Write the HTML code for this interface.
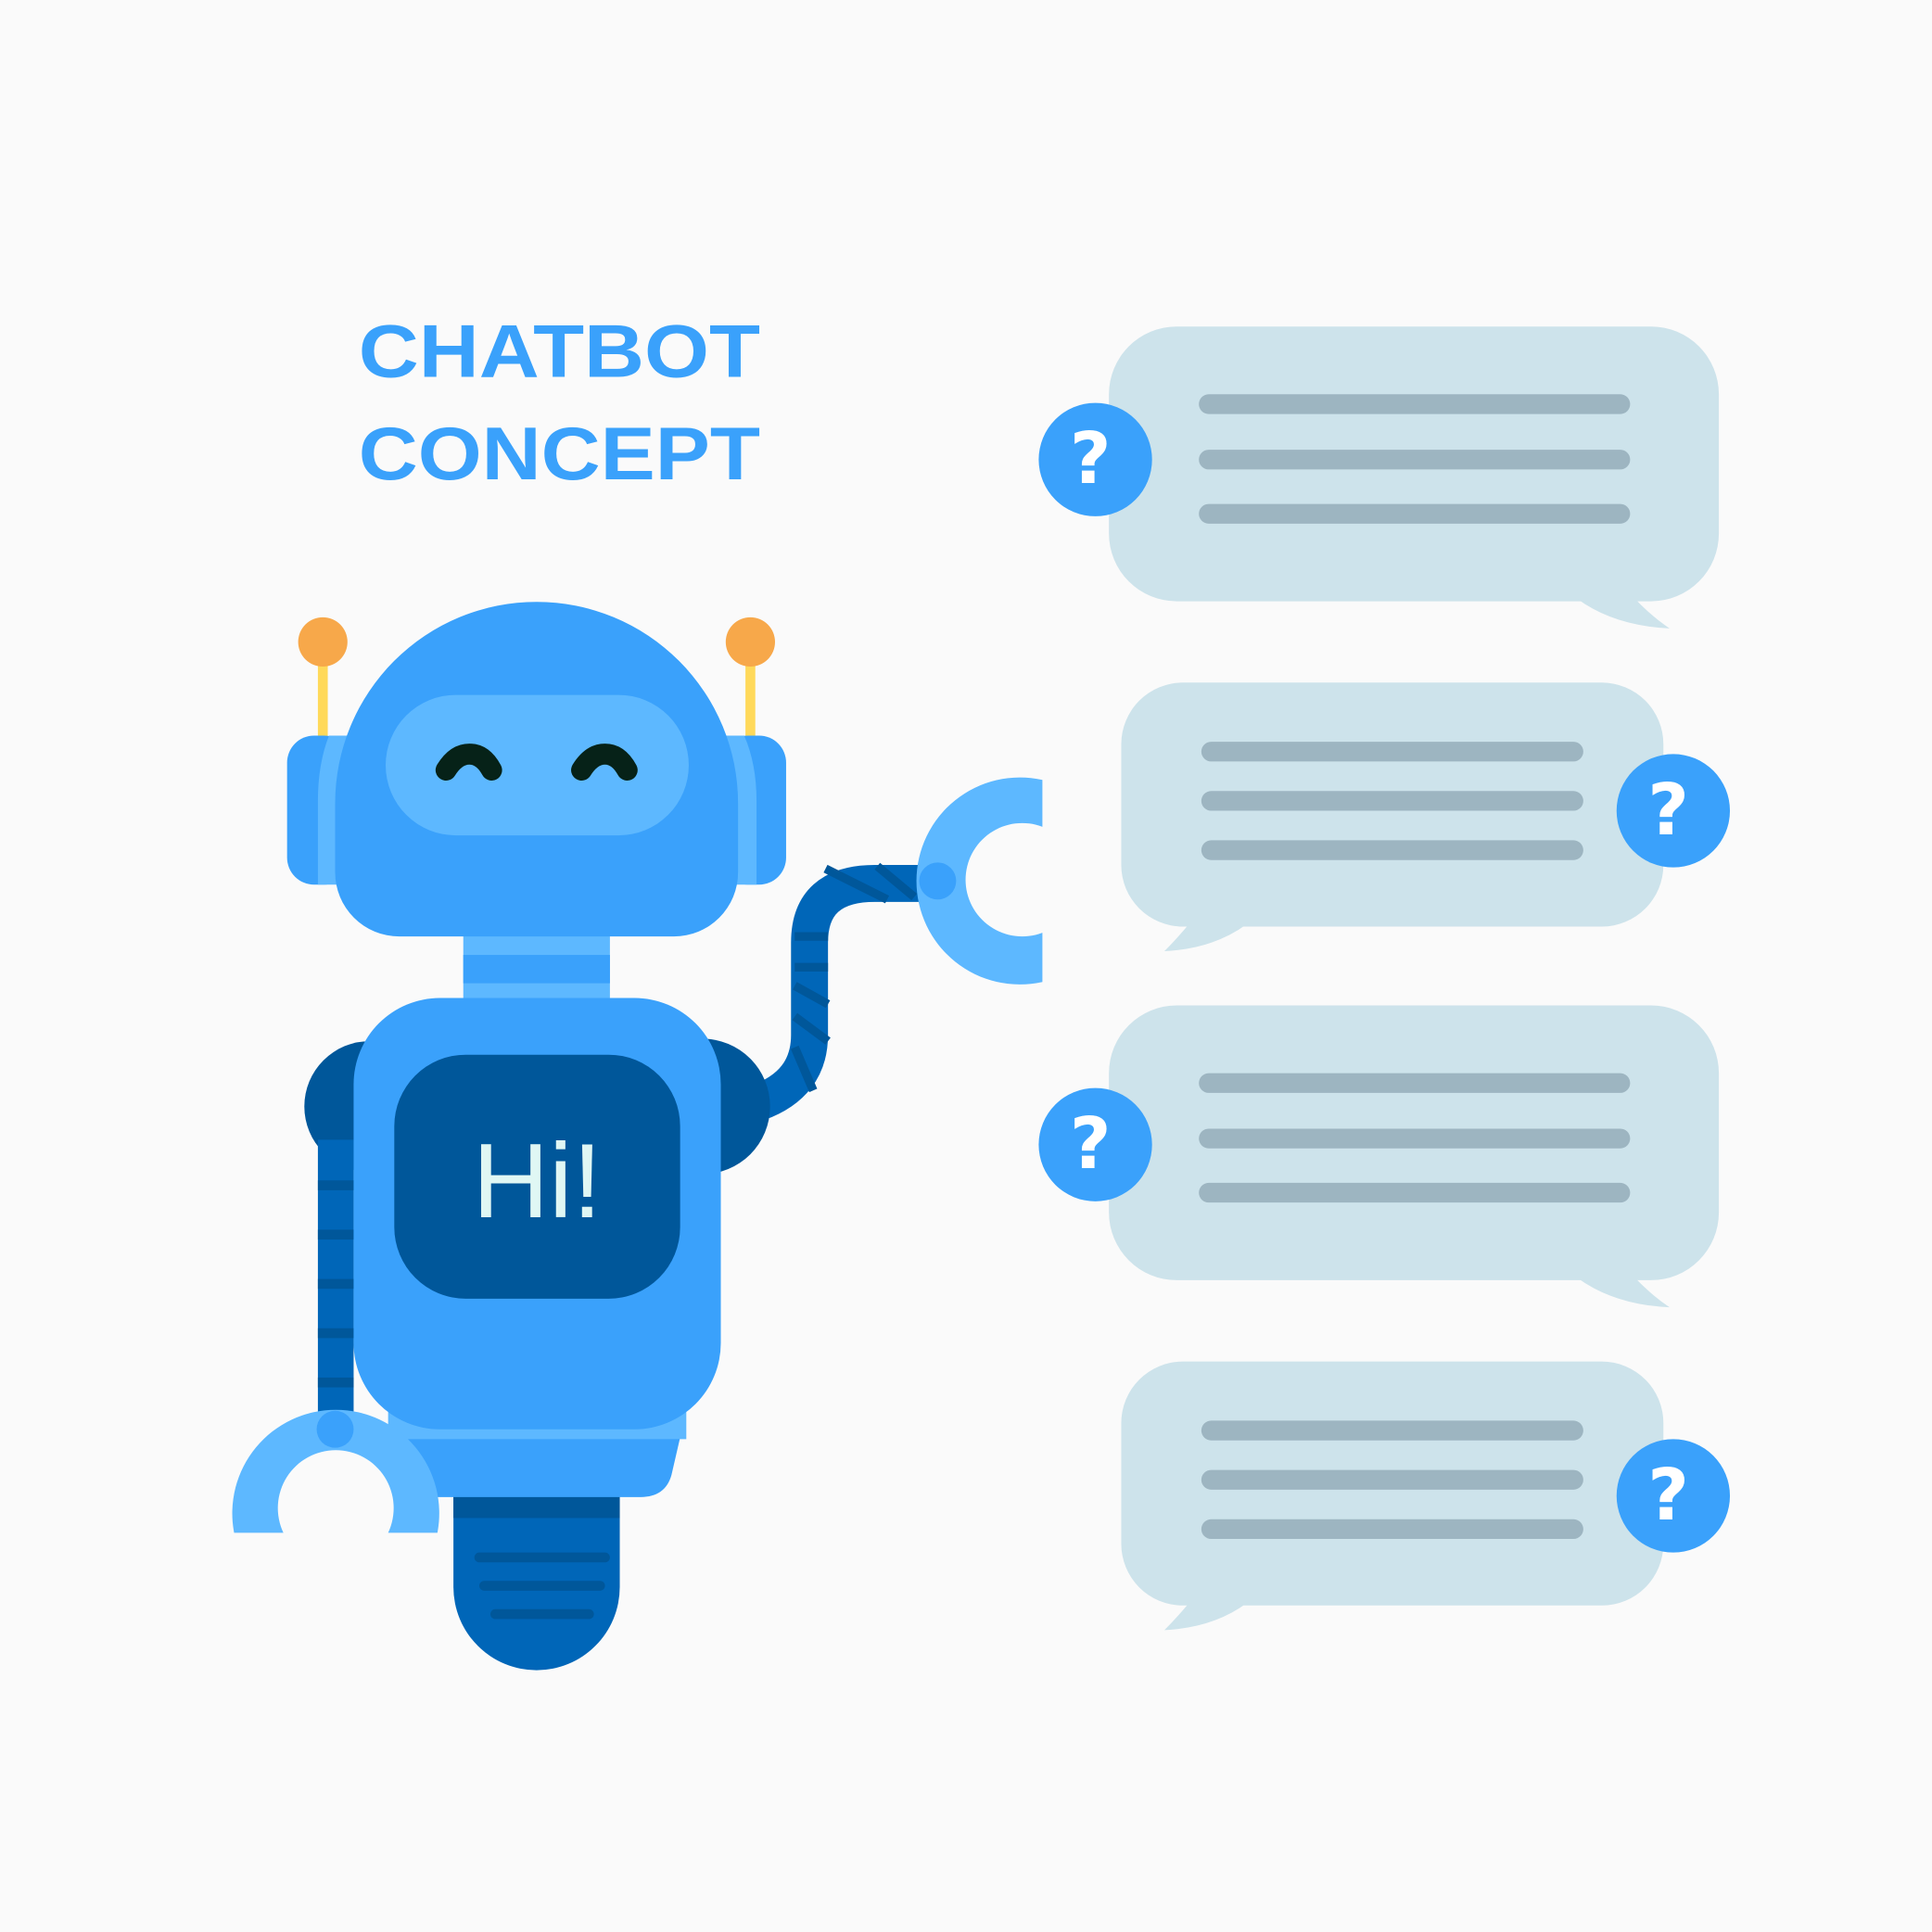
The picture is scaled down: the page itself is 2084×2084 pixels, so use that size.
<!DOCTYPE html>
<html><head><meta charset="utf-8"><style>html,body{margin:0;padding:0;background:#fafafa}svg{display:block}</style></head>
<body>
<svg width="2084" height="2084" viewBox="0 0 1568 1568" xmlns="http://www.w3.org/2000/svg">
<rect width="1568" height="1568" fill="#fafafa"/>
<g font-family="Liberation Sans, sans-serif" font-weight="bold" fill="#3aa1fb" font-size="61">
<text x="291" y="306" textLength="326" lengthAdjust="spacingAndGlyphs">CHATBOT</text>
<text x="291" y="389" textLength="326" lengthAdjust="spacingAndGlyphs">CONCEPT</text>
</g>
<defs>
<g id="q"><circle r="46" fill="#3aa1fb"/><text x="-4" y="19" text-anchor="middle" font-family="DejaVu Sans, sans-serif" font-weight="bold" font-size="58" fill="#fff">?</text></g>
</defs>
<g fill="#cde3eb">
<rect x="900" y="265" width="495" height="223" rx="55"/>
<path d="M1280,486 Q1310,508 1355,510 Q1340,500 1325,484 Z"/>
<rect x="910" y="554" width="440" height="198" rx="50"/>
<path d="M965,750 Q955,762 945,772 Q985,770 1012,750 Z"/>
<rect x="900" y="816" width="495" height="223" rx="55"/>
<path d="M1280,1037 Q1310,1059 1355,1061 Q1340,1051 1325,1035 Z"/>
<rect x="910" y="1105" width="440" height="198" rx="50"/>
<path d="M965,1301 Q955,1313 945,1323 Q985,1321 1012,1301 Z"/>
</g>
<g stroke="#9db5c1" stroke-width="16" stroke-linecap="round">
<line x1="981" y1="328" x2="1315" y2="328"/><line x1="981" y1="373" x2="1315" y2="373"/><line x1="981" y1="417" x2="1315" y2="417"/>
<line x1="983" y1="610" x2="1277" y2="610"/><line x1="983" y1="650" x2="1277" y2="650"/><line x1="983" y1="690" x2="1277" y2="690"/>
<line x1="981" y1="879" x2="1315" y2="879"/><line x1="981" y1="924" x2="1315" y2="924"/><line x1="981" y1="968" x2="1315" y2="968"/>
<line x1="983" y1="1161" x2="1277" y2="1161"/><line x1="983" y1="1201" x2="1277" y2="1201"/><line x1="983" y1="1241" x2="1277" y2="1241"/>
</g>
<use href="#q" x="889" y="373"/><use href="#q" x="1358" y="658"/><use href="#q" x="889" y="929"/><use href="#q" x="1358" y="1214"/>
<line x1="262" y1="540" x2="262" y2="600" stroke="#ffd95a" stroke-width="8"/>
<line x1="609" y1="540" x2="609" y2="600" stroke="#ffd95a" stroke-width="8"/>
<circle cx="262" cy="521" r="20" fill="#f7a84a"/><circle cx="609" cy="521" r="20" fill="#f7a84a"/>
<rect x="233" y="597" width="52" height="121" rx="22" fill="#3aa1fb"/>
<rect x="585" y="597" width="53" height="121" rx="22" fill="#3aa1fb"/>
<path d="M267,597 L285,597 L285,718 L258,718 L258,650 Q258,620 267,597 Z" fill="#5db8ff"/>
<path d="M604,597 L586,597 L586,718 L614,718 L614,650 Q614,620 604,597 Z" fill="#5db8ff"/>
<path d="M615,895 Q657,880 657,840 L657,765 Q657,717 710,717 L762,717" fill="none" stroke="#0066b8" stroke-width="30"/>
<path d="M645,760 L672,760 M645,785 L672,785 M645,800 L672,815 M645,825 L672,845 M645,850 L660,885 M670,705 L720,730 M712,703 L742,728" stroke="#00579a" stroke-width="7"/>
<path d="M846,633 A84,84 0 1 0 846,797 L846,757 A46,46 0 1 1 846,671 Z" fill="#5db8ff"/>
<circle cx="761" cy="715" r="15" fill="#3aa1fb"/>
<circle cx="300" cy="898" r="53" fill="#00579a"/>
<circle cx="570" cy="898" r="55" fill="#00579a"/>
<rect x="258" y="925" width="29" height="225" fill="#0066b8"/>
<g fill="#00579a"><rect x="258" y="958" width="29" height="8"/><rect x="258" y="998" width="29" height="8"/><rect x="258" y="1038" width="29" height="8"/><rect x="258" y="1078" width="29" height="8"/><rect x="258" y="1118" width="29" height="8"/></g>
<path d="M368,1210 L503,1210 L503,1288 A67.5,67.5 0 0 1 368,1288 Z" fill="#0066b8"/>
<rect x="368" y="1212" width="135" height="20" fill="#00579a"/>
<g stroke="#00579a" stroke-width="8" stroke-linecap="round"><line x1="389" y1="1264" x2="491" y2="1264"/><line x1="393" y1="1287" x2="487" y2="1287"/><line x1="402" y1="1310" x2="478" y2="1310"/></g>
<path d="M315,1145 L557,1145 L545,1197 Q540,1215 520,1215 L350,1215 Q330,1215 326,1197 Z" fill="#3aa1fb"/>
<rect x="315" y="1145" width="242" height="23" fill="#5db8ff"/>
<path d="M190,1244 A84,84 0 1 1 355,1244 L315,1244 A47,47 0 1 0 230,1244 Z" fill="#5db8ff"/>
<circle cx="272" cy="1160" r="15" fill="#3aa1fb"/>
<rect x="376" y="755" width="119" height="60" fill="#5db8ff"/>
<rect x="376" y="775" width="119" height="23" fill="#3aa1fb"/>
<path d="M272,652 A163.5,163.5 0 0 1 599,652 L599,708 A52,52 0 0 1 547,760 L324,760 A52,52 0 0 1 272,708 Z" fill="#3aa1fb"/>
<rect x="313" y="564" width="246" height="114" rx="57" fill="#5db8ff"/>
<g fill="none" stroke="#062218" stroke-width="17" stroke-linecap="round">
<path d="M362,625 Q370,612 381,612 Q392,612 399,625"/>
<path d="M472,625 Q480,612 491,612 Q502,612 509,625"/>
</g>
<rect x="287" y="810" width="298" height="350" rx="70" fill="#3aa1fb"/>
<rect x="320" y="856" width="232" height="198" rx="58" fill="#00579a"/>
<text x="436" y="988" text-anchor="middle" font-family="Liberation Sans, sans-serif" font-size="86" fill="#e0f7f4">Hi!</text>
</svg>
</body></html>
